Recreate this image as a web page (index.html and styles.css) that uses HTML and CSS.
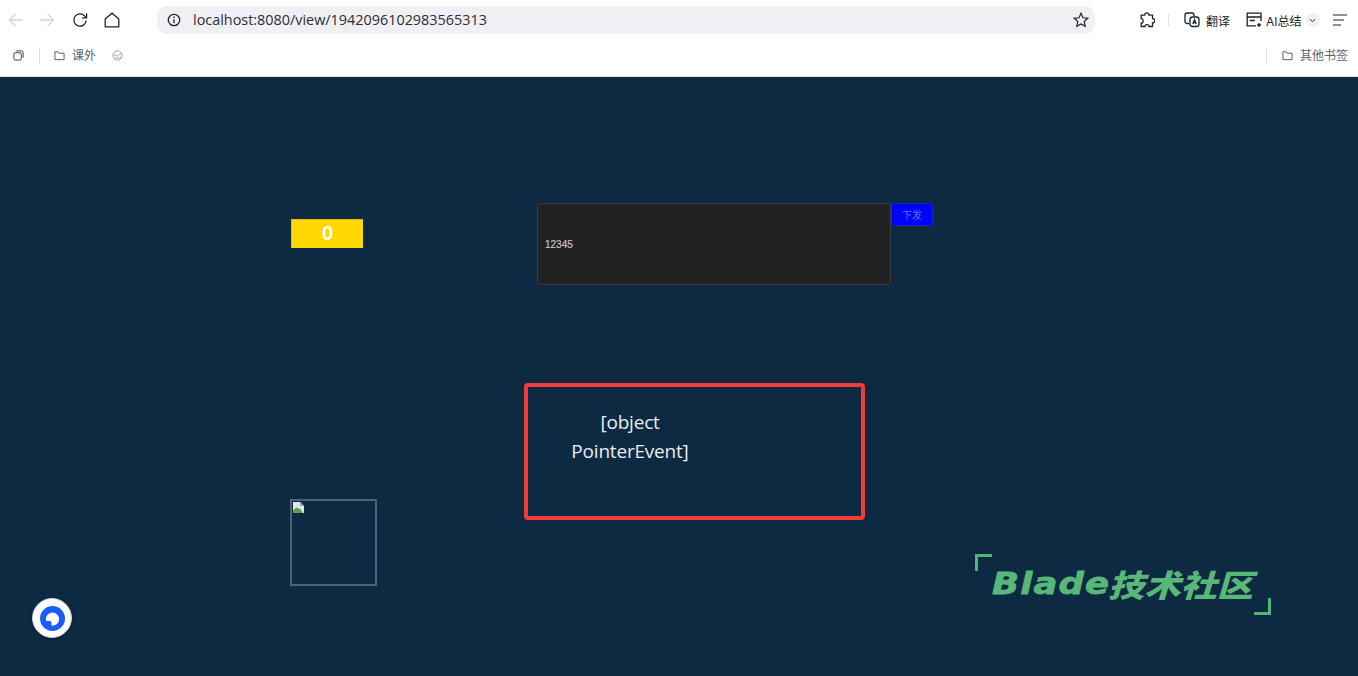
FILE: index.html
```html
<!DOCTYPE html>
<html lang="zh">
<head>
<meta charset="utf-8">
<title>Blade</title>
<link rel="stylesheet" href="styles.css">
</head>
<body>
<header class="browser">
  <div class="toolbar">
    <div class="nav">
      <svg class="ico muted" viewBox="0 0 16 16"><path d="M15 8H1.500M7.500 2L1.500 8l6 6"/></svg>
      <svg class="ico muted forward" viewBox="0 0 16 16"><path d="M1 8h13.500M8.500 2l6 6-6 6"/></svg>
      <svg class="ico" viewBox="0 0 16 16"><path d="M14.200 8.500A6.200 6.200 0 1 1 12.400 3.600L14.400 5.600M14.600 1.200v4.600H10"/></svg>
      <svg class="ico" viewBox="0 0 16 16"><path d="M1.200 7L8 1.200 14.800 7v7.800H1.200z"/></svg>
    </div>
    <div class="address">
      <svg class="info" viewBox="0 0 14 14"><circle cx="7" cy="7" r="5.700"/><path d="M7 6.300v4M7 3.600v1.400"/></svg>
      <span class="url">localhost:8080/view/1942096102983565313</span>
      <svg class="star" viewBox="0 0 16 16"><path d="M8 1.300l2 4.500 4.800.5-3.600 3.200 1 4.800L8 11.900l-4.200 2.400 1-4.800L1.200 6.300 6 5.800z"/></svg>
    </div>
    <div class="tools">
      <svg class="ico puzzle" viewBox="0 0 16 16"><path d="M5.600 3.200c0-3 4.400-3 4.400 0h3.500v3.400c3 0 3 4.400 0 4.400v3.500H10c0-2.600-4-2.600-4 0H2.200v-3.400c2.600 0 2.600-4.400 0-4.400V3.200z"/></svg>
      <span class="divider"></span>
      <div class="tool translate">
        <svg class="ico" viewBox="0 0 16 16"><path d="M5 11.500H3a2 2 0 0 1-2-2V3a2 2 0 0 1 2-2h5a2 2 0 0 1 2 2v1.500"/><rect x="6" y="5" width="9" height="9.500" rx="2.500"/><path class="thin" d="M8.800 12l1.700-4.500 1.700 4.500M9.400 10.600h2.200"/></svg>
        <span>翻译</span>
      </div>
      <div class="tool summary">
        <svg class="ico" viewBox="0 0 16 16"><path d="M15 9V1.200H1.200v12.600H10M1.200 5h13.800M3.800 8.500h5M13 11v4M11 13h4"/></svg>
        <span>AI总结</span>
        <span class="chev"><svg viewBox="0 0 8 6"><path d="M1 1.500l3 3 3-3"/></svg></span>
      </div>
      <svg class="ico menu" viewBox="0 0 16 16"><path d="M1 3h14M1 8h11M1 13h8"/></svg>
    </div>
  </div>
  <div class="bookmarks">
    <svg class="small tabs" viewBox="0 0 12 12"><rect x="1" y="3" width="8" height="8" rx="1.500"/><path d="M3.500 1h6A1.500 1.500 0 0 1 11 2.500v6"/></svg>
    <span class="bar-sep"></span>
    <svg class="small folder" viewBox="0 0 12 12"><path d="M1 2h3.500l1 1.500H11V10.500H1z"/></svg>
    <span class="bm-label">课外</span>
    <svg class="small globe" viewBox="0 0 12 12"><circle cx="6" cy="6" r="5"/><path d="M1.500 6.500C3.500 3.500 5 8 7 6s2-2.500 3.800-1.500M2.500 9.500C5 7.500 7 10 10 8"/></svg>
    <span class="grow"></span>
    <span class="bar-sep right"></span>
    <svg class="small folder" viewBox="0 0 12 12"><path d="M1 2h3.500l1 1.500H11V10.500H1z"/></svg>
    <span class="bm-label other">其他书签</span>
  </div>
</header>
<main class="canvas">
  <div class="counter">0</div>
  <div class="input-box">12345</div>
  <button class="send" type="button">下发</button>
  <div class="event-box"><p class="event-text">[object PointerEvent]</p></div>
  <div class="broken-img">
    <svg class="broken-icon" viewBox="0 0 12 12"><path fill="#dbe6f7" d="M0 0h8l4 4v8H0z"/><path fill="#5aa63c" d="M0 12V9l4-3 4 2 3 4z"/><path fill="#888" d="M8 0l4 4H8z"/></svg>
  </div>
  <div class="logo">
    <span class="corner tl"></span>
    <span class="logo-text"><span class="logo-latin">Blade</span><span class="logo-cjk">技术社区</span></span>
    <span class="corner br"></span>
  </div>
  <div class="fab"><svg viewBox="0 0 24 24"><circle cx="12" cy="12" r="12" fill="#1a5cff"/><circle cx="12" cy="12.500" r="6.300" fill="#fff"/><rect x="4.500" y="14.500" width="6.500" height="5" rx="1.500" fill="#1a5cff"/></svg></div>
</main>
</body>
</html>
```
FILE: styles.css
```css
* { box-sizing: border-box; }
html, body { margin: 0; height: 100%; overflow: hidden; }
body { display: flex; flex-direction: column; background: #0e2a43; font-family: "Inter", "Noto Sans CJK SC", sans-serif; }

.browser { background: #fff; height: 77px; flex: none; border-bottom: 1px solid #dfe1e5; color: #1f2430; }
svg { display: block; fill: none; stroke: currentColor; }

.toolbar { display: flex; align-items: center; height: 39px; padding: 0 10px 0 8px; }
.nav { display: flex; align-items: center; gap: 16px; width: 149px; flex: none; }
.ico { width: 16px; height: 16px; stroke-width: 1.300; flex: none; }
.muted { color: #d3d5da; }
.forward { margin: 0 1px 0 -1px; }
.address { display: flex; align-items: center; width: 938px; height: 28px; margin-top: 1px; padding: 0 6px 0 10px; background: #f0f0f4; border-radius: 10px; flex: none; }
.info { width: 14px; height: 14px; stroke-width: 1.300; flex: none; }
.url { margin-left: 12px; flex: 1; font: 14.400px/28px "Open Sans", sans-serif; color: #2b2e36; }
.star { width: 16px; height: 16px; stroke-width: 1.200; }
.tools { display: flex; align-items: center; flex: 1; margin-left: 44px; margin-top: 1px; font-size: 12px; color: #1c2230; white-space: nowrap; }
.divider { width: 1px; height: 12px; background: #e3e4e8; margin: 0 15px 0 13px; flex: none; }
.tool { display: flex; align-items: center; flex: none; }
.translate { gap: 6px; margin-right: 16px; }
.summary { gap: 4px; }
.chev { display: flex; align-items: center; justify-content: center; width: 14px; height: 14px; border-radius: 50%; background: #f2f2f4; }
.chev svg { width: 7px; height: 5px; stroke-width: 1.200; }
.menu { margin-left: 12px; stroke-width: 1.100; }

.bookmarks { display: flex; align-items: center; height: 37px; padding: 0 10px 4px 13px; font-size: 12px; color: #5c6270; }
.small { width: 11px; height: 11px; stroke-width: 1; flex: none; }
.tabs { color: #2a2e38; }
.bar-sep { width: 1px; height: 16px; background: #dcdde2; margin: 0 14px 0 15px; flex: none; }
.bar-sep.right { margin: 0 15px 0 0; }
.folder { color: #4a4f5c; }
.bm-label { margin-left: 7px; line-height: 16px; }
.globe { margin-left: 16px; color: #9b9ea6; }
.grow { flex: 1; }

.canvas { position: relative; flex: 1; background: #0e2a43; }
.counter { position: absolute; left: 291px; top: 142px; width: 72px; height: 29px; background: #ffd700; border-top: 1px solid #e3c000; border-left: 1px solid #e3c000; color: #fff; font: 700 20px/27px "Liberation Sans", sans-serif; text-align: center; }
.input-box { position: absolute; left: 537px; top: 126px; width: 354px; height: 82px; padding-left: 7px; display: flex; align-items: center; background: #222; border: 1px solid #3a3c3f; border-radius: 3px; color: #c4c4c4; font: 10px "Liberation Sans", sans-serif; -webkit-text-stroke: .2px #c4c4c4; }
.send { position: absolute; left: 891px; top: 126px; width: 42px; height: 23px; padding: 0; background: #0000ff; border: 1px solid #0a2bc0; border-radius: 2px; color: #4a7cf0; font: 10px "Noto Sans CJK SC", sans-serif; }
.event-box { position: absolute; left: 524px; top: 306px; width: 341px; height: 137px; border: 4px solid #f43a3a; border-radius: 4px; }
.event-text { margin: 21px 0 0 37px; width: 130px; color: #e8edf2; font: 500 19px/29px "Open Sans", sans-serif; text-align: center; letter-spacing: -.2px; }
.broken-img { position: absolute; left: 290px; top: 422px; width: 87px; height: 87px; border: 2px solid #4f6274; padding: 1px; }
.broken-icon { width: 11px; height: 11px; stroke: none; }
.logo { position: absolute; left: 975px; top: 477px; width: 296px; height: 61px; }
.corner { position: absolute; width: 17px; height: 17px; border: 0 solid #52b673; }
.tl { left: 0; top: 0; border-width: 3px 0 0 3px; }
.br { right: 0; bottom: 0; border-width: 0 3px 3px 0; }
.logo-text { position: absolute; left: 17px; top: 11px; display: flex; align-items: center; color: #59b877; white-space: nowrap; }
.logo-latin { display: block; width: 116px; font: italic 700 30px/38px "DejaVu Sans", sans-serif; letter-spacing: 1px; transform: scaleX(1.180); transform-origin: left center; -webkit-text-stroke: .8px #59b877; }
.logo-cjk { display: block; width: 146px; font: italic 900 31px/38px "Noto Sans CJK SC", sans-serif; transform: scaleX(1.170); transform-origin: left center; }
.fab { position: absolute; left: 32px; top: 521px; width: 40px; height: 40px; padding: 6.500px; border-radius: 50%; background: #fff; border: 1.500px solid #c6ccd4; box-shadow: 0 1px 3px rgba(0,0,0,.3); }
.fab svg { stroke: none; width: 100%; height: 100%; }
```
